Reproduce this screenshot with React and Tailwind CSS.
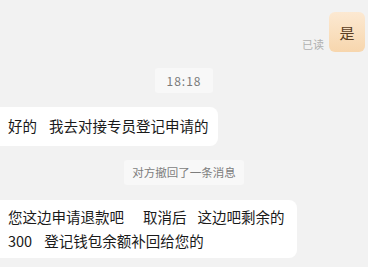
import React from 'react';

const Gap = ({ w }) => <span className={`inline-block ${w}`} />;

const App = () => {
  return (
    <div
      className="w-[368px] h-[267px] overflow-hidden bg-[#f2f2f2] flex flex-col"
      style={{ fontFamily: '"Noto Sans CJK SC", "Noto Sans", sans-serif' }}
    >
      {/* my message */}
      <div className="flex justify-end items-end pt-[12px] pr-[3px]">
        <span className="text-[11px] text-[#b0b0b0] mr-[5px] mb-[2px] leading-none">已读</span>
        <div className="w-[36px] h-[40px] rounded-[6px] bg-gradient-to-b from-[#fce9d2] to-[#f7d6ad] flex items-center justify-center">
          <span className="text-[15px] text-[#5a3d22] leading-none">是</span>
        </div>
      </div>

      {/* time */}
      <div className="flex justify-center mt-[16px]">
        <div className="w-[58px] h-[25px] bg-[#f8f8f8] rounded-[3px] flex items-center justify-center">
          <span className="text-[12px] text-[#7a7a7a] tracking-[1px] leading-none">18:18</span>
        </div>
      </div>

      {/* incoming */}
      <div className="mt-[14px] w-[218px] h-[39px] bg-white rounded-r-[8px] flex items-center pl-[8px]">
        <span className="text-[14.5px] text-[#1a1a1a] leading-none whitespace-nowrap">
          好的<Gap w="w-[12px]" />我去对接专员登记申请的
        </span>
      </div>

      {/* recalled */}
      <div className="flex justify-center mt-[14px]">
        <div className="w-[120px] h-[25px] bg-[#f8f8f8] rounded-[3px] flex items-center justify-center">
          <span className="text-[11.5px] text-[#7d7d7d] leading-none">对方撤回了一条消息</span>
        </div>
      </div>

      {/* incoming */}
      <div className="mt-[15px] w-[297px] h-[58px] bg-white rounded-r-[8px] flex flex-col justify-center pl-[8px]">
        <p className="text-[14.5px] text-[#1a1a1a] leading-[24px] whitespace-nowrap">
          您这边申请退款吧<Gap w="w-[19px]" />取消后<Gap w="w-[11px]" />这边吧剩余的
        </p>
        <p className="text-[14.5px] text-[#1a1a1a] leading-[24px] whitespace-nowrap">
          300<Gap w="w-[12px]" />登记钱包余额补回给您的
        </p>
      </div>
    </div>
  );
};

export default App;
